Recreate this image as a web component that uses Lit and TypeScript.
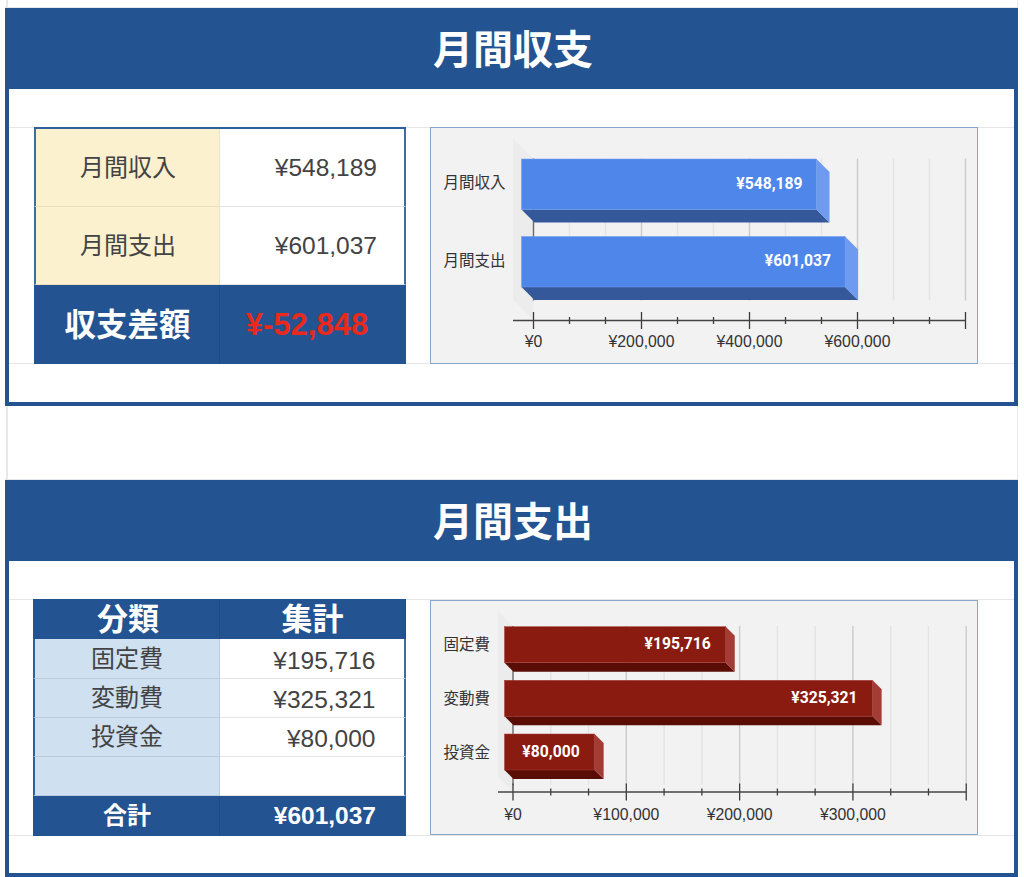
import { LitElement, html, css, svg } from "lit";
import { customElement } from "lit/decorators.js";

interface Bar { label: string; value: number; text: string; y: number; }
interface Chart {
  h: number; zero: number; wallX: number; step: number; frontX: number; depth: number; barH: number;
  axisY: number; gridTop: number; gridBottom: number; perMinor: number; minors: number; labelsEvery: number;
  front: string; side: string; under: string; edge: string; bars: Bar[]; ticks: string[]; top: number;
  catDy: number; catGap: number; valGap: number; tickDy: number;
}

const drawChart = (c: Chart) => {
  const xs = Array.from({ length: c.minors + 1 }, (_, i) => c.zero + i * c.step);
  const w = c.zero - c.wallX;
  return svg`
  <svg class="plot" width="548" height="${c.h}" viewBox="430 ${c.top} 548 ${c.h}">
    <polygon points="${c.wallX},${c.gridTop - w} ${c.zero},${c.gridTop} ${c.zero},${c.axisY} ${c.wallX},${c.axisY - w}" fill="#ececec"></polygon>
    ${xs.map((x, i) => {
      const major = i % c.labelsEvery === 0;
      const last = i === c.minors;
      const col = i === 0 ? "#6a6a6a" : major || last ? "#cbcbcb" : "#e4e4e4";
      const tk = major || last ? 8.5 : 3.5;
      return svg`
        <line x1="${x}" x2="${x}" y1="${c.gridTop}" y2="${c.gridBottom}" stroke="${col}" stroke-width="1.4"></line>
        <line x1="${x}" x2="${x}" y1="${c.axisY - tk}" y2="${c.axisY + tk}" stroke="#3a3a3a" stroke-width="1.3"></line>`;
    })}
    <line x1="${c.wallX}" x2="${xs[xs.length - 1]}" y1="${c.axisY}" y2="${c.axisY}" stroke="#444" stroke-width="1.4"></line>
    ${c.bars.map((b) => {
      const x0 = c.frontX;
      const d = c.depth;
      const x1 = c.zero + (b.value / c.perMinor) * c.step - d;
      const y0 = b.y, y1 = b.y + c.barH;
      const mid = (y0 + y1) / 2;
      return svg`
        <polygon points="${x0},${y1} ${x1},${y1} ${x1 + d},${y1 + d} ${x0 + d},${y1 + d}" fill="${c.under}"></polygon>
        <polygon points="${x1},${y0} ${x1 + d},${y0 + d} ${x1 + d},${y1 + d} ${x1},${y1}" fill="${c.side}"></polygon>
        <rect x="${x0}" y="${y0}" width="${x1 - x0}" height="${c.barH}" fill="${c.front}" stroke="${c.edge}" stroke-width="0.5"></rect>
        <text class="val" x="${x1 - c.valGap}" y="${mid + 4.5}" text-anchor="end">${b.text}</text>
        <text class="cat" x="${x0 - c.catGap}" y="${mid + c.catDy}" text-anchor="end">${b.label}</text>`;
    })}
    ${c.ticks.map((t, i) => svg`<text class="tick" x="${c.zero + i * c.labelsEvery * c.step}" y="${c.axisY + c.tickDy}" text-anchor="middle">${t}</text>`)}
  </svg>`;
};

const incomeChart: Chart = {
  h: 237, top: 126.5, zero: 533.5, wallX: 513, step: 36, frontX: 521.5, depth: 13, barH: 50.5,
  axisY: 320, gridTop: 158, gridBottom: 300, perMinor: 66667, minors: 12, labelsEvery: 3,
  catDy: 4, catGap: 16, valGap: 14, tickDy: 26,
  front: "#4f86ea", side: "#6e9af0", under: "#35589b", edge: "#6d9bee",
  bars: [
    { label: "月間収入", value: 548189, text: "¥548,189", y: 158.5 },
    { label: "月間支出", value: 601037, text: "¥601,037", y: 236 },
  ],
  ticks: ["¥0", "¥200,000", "¥400,000", "¥600,000"],
};

const spendChart: Chart = {
  h: 235, top: 600, zero: 513, wallX: 498, step: 37.77, frontX: 504.5, depth: 9, barH: 36,
  axisY: 792, gridTop: 626, gridBottom: 785, perMinor: 33333, minors: 12, labelsEvery: 3,
  catDy: 5.5, catGap: 14.5, valGap: 15, tickDy: 28,
  front: "#8a1b10", side: "#a33c35", under: "#5a0d05", edge: "#a33c35",
  bars: [
    { label: "固定費", value: 195716, text: "¥195,716", y: 626.7 },
    { label: "変動費", value: 325321, text: "¥325,321", y: 680.3 },
    { label: "投資金", value: 80000, text: "¥80,000", y: 734 },
  ],
  ticks: ["¥0", "¥100,000", "¥200,000", "¥300,000"],
};

@customElement("app-root")
export class AppRoot extends LitElement {
  static styles = css`
    :host {
      display: block;
      width: 1024px;
      height: 877px;
      overflow: hidden;
      background: #fff;
      font-family: "Liberation Sans", "Noto Sans CJK JP", sans-serif;
      color: #434343;
    }
    .page {
      display: flex;
      flex-direction: column;
      gap: 74px;
      margin: 0 6px;
      padding-top: 8px;
      height: 869px;
      border-left: 2px solid #e8e8e8;
      border-right: 1px solid #e8e8e8;
    }
    .sec {
      border: solid #235390;
      border-width: 0 4px 4px 4px;
      background: #fff;
      margin: 0 -1px 0 -3px;
    }
    .title {
      background: #235390;
      margin: 0 -4px;
      height: 81px;
      box-sizing: border-box;
      padding: 0 0 4px 3px;
      box-shadow: 0 -1px 0 #e4e8ee;
      display: flex;
      align-items: center;
      justify-content: center;
      color: #fff;
      font-size: 40px;
      font-weight: 700;
      font-family: "Noto Sans CJK JP", sans-serif;
    }
    .row {
      margin-top: 38px;
      margin-bottom: 38px;
      height: 235px;
      border-top: 1px solid #e6e6e6;
      border-bottom: 1px solid #e6e6e6;
      display: flex;
      padding-left: 25px;
      gap: 24px;
      align-items: flex-start;
    }
    .row.last { margin-bottom: 37px; }
    .grid {
      display: grid;
      grid-template-columns: 186px 186px;
      width: 372px;
      margin-top: -1px;
      height: 237px;
      box-sizing: border-box;
      flex: none;
    }
    .a { grid-template-rows: 78px 78px 79px; border-top: 2px solid #2f5f9c; }
    .b {
      grid-template-columns: 187px 186px;
      width: 373px;
      margin-left: -1px;
      margin-right: 0;
      grid-template-rows: 40px 39.5px 39px 39.5px 39px 40px;
    }
    .c {
      display: flex;
      align-items: center;
      min-width: 0;
      box-sizing: border-box;
    }
    .k {
      justify-content: center;
      font-family: "Noto Sans CJK JP", sans-serif;
      font-size: 24px;
      padding-bottom: 4px;
      padding-left: 1px;
    }
    .v {
      justify-content: flex-end;
      font-size: 24.5px;
      padding-right: 27px;
      padding-top: 1px;
      background: #fff;
      border-right: 2px solid #3f6ca5;
      border-bottom: 1px solid #e4e4e4;
    }
    .y {
      background: #fcf1cf;
      border-bottom: 1px solid #e9dfc0;
      border-right: 1px solid #e8e2d0;
      border-left: 2px solid #3f6ca5;
    }
    .bl {
      background: #cfe0f0;
      border-bottom: 1px solid #b9cbdc;
      border-right: 1px solid #b9cbdc;
      border-left: 2px solid #2f5f9c;
      padding: 0 0 4px 0;
    }
    .d {
      background: #235390;
      color: #fff;
      font-weight: 700;
      border-right: 1px solid #1f4c85;
    }
    .d.v { border: 0; }
    .big { font-size: 31.5px; padding: 0 0 5px 2px; }
    .red { color: #e8291c; font-size: 31px; justify-content: center; padding: 0 12px 0 0; }
    .head { font-size: 31px; padding: 0 0 5px 0; }
    .head.first { padding-left: 4px; }
    .foot { font-size: 24px; padding: 0 0 6px 2px; }
    .pad { padding-right: 28.5px; padding-top: 5px; }
    .footv { font-size: 24.5px; padding: 0 30px 0 0; }
    .chart {
      width: 548px;
      height: 237px;
      margin-top: -1.5px;
      background: #f2f2f2;
      box-sizing: border-box;
      flex: none;
      outline: 1px solid #88a5cc;
      outline-offset: -1px;
    }
    .chart.flat { height: 235px; margin-top: 0; }
    .plot { display: block; }
    .val { font: 700 15.7px Roboto, sans-serif; fill: #fff; }
    .cat { font: 400 15.5px "Noto Sans CJK JP", sans-serif; fill: #333; }
    .tick { font: 400 15.8px "Liberation Sans", sans-serif; fill: #333; }
  `;

  render() {
    return html`
      <div class="page">
        <section class="sec">
          <div class="title">月間収支</div>
          <div class="row">
            <div class="grid a">
              <div class="c k y">月間収入</div><div class="c v">¥548,189</div>
              <div class="c k y">月間支出</div><div class="c v">¥601,037</div>
              <div class="c k d big">収支差額</div><div class="c v d red">¥-52,848</div>
            </div>
            <div class="chart">${drawChart(incomeChart)}</div>
          </div>
        </section>
        <section class="sec">
          <div class="title">月間支出</div>
          <div class="row last">
            <div class="grid b">
              <div class="c k d head first">分類</div><div class="c k d head">集計</div>
              <div class="c k bl">固定費</div><div class="c v pad">¥195,716</div>
              <div class="c k bl">変動費</div><div class="c v pad">¥325,321</div>
              <div class="c k bl">投資金</div><div class="c v pad">¥80,000</div>
              <div class="c k bl"></div><div class="c v pad"></div>
              <div class="c k d foot">合計</div><div class="c v d footv">¥601,037</div>
            </div>
            <div class="chart flat">${drawChart(spendChart)}</div>
          </div>
        </section>
      </div>
    `;
  }
}
